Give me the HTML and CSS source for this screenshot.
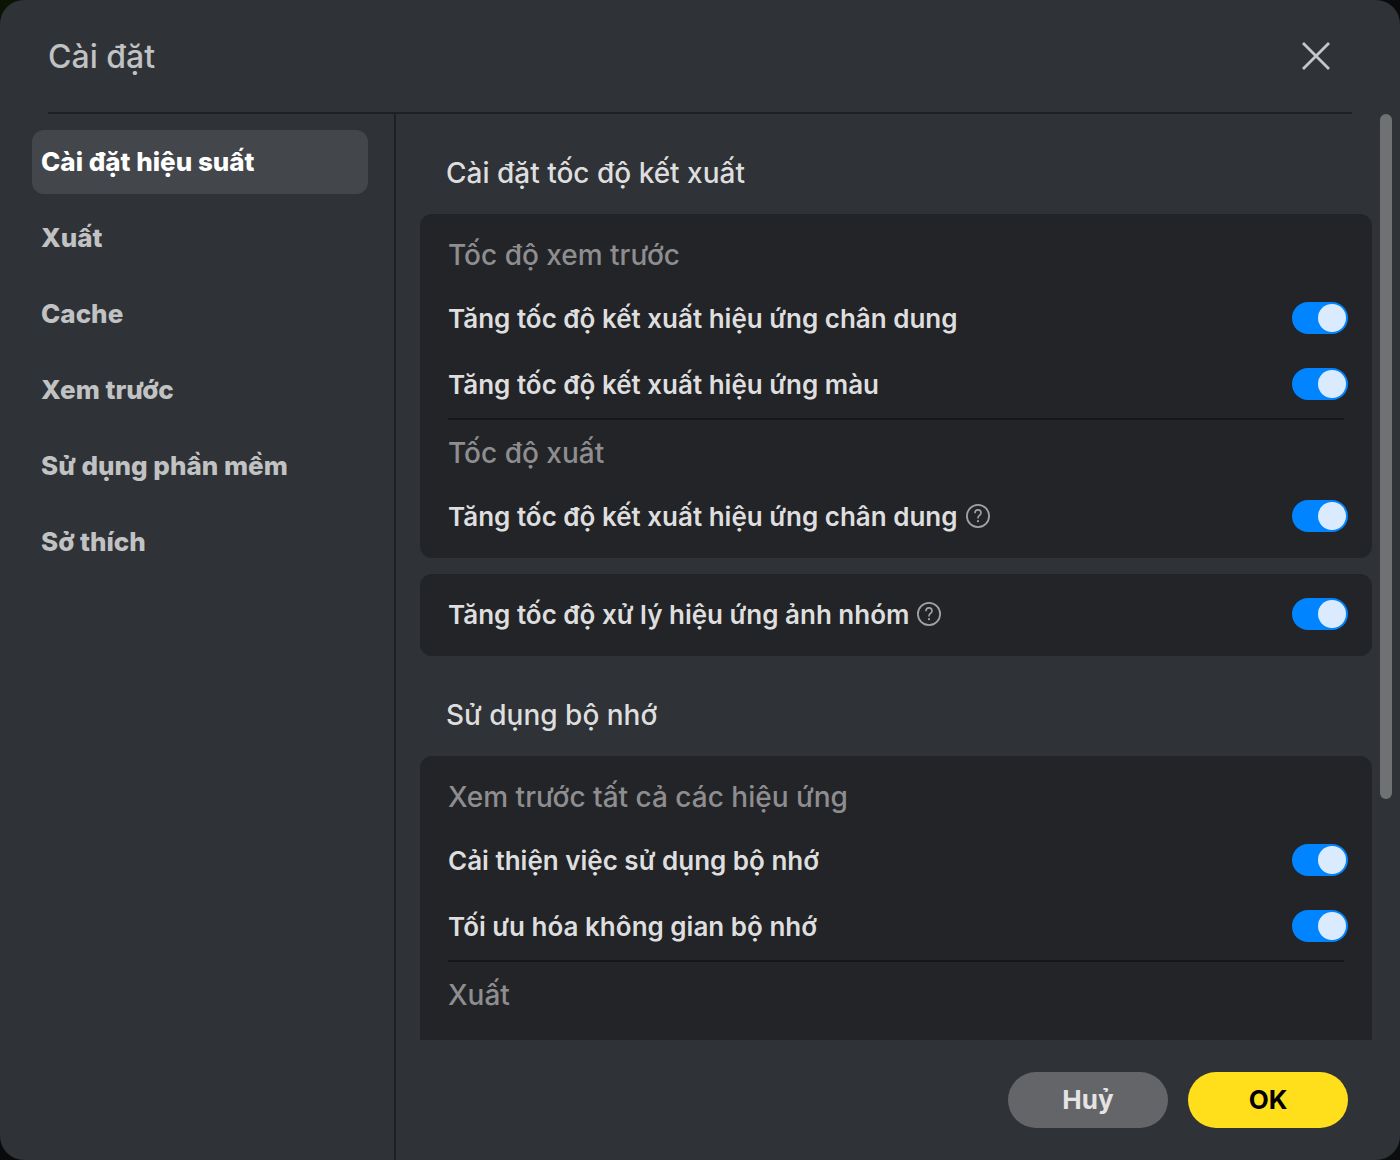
FILE: index.html
```html
<!DOCTYPE html>
<html lang="vi">
<head>
<meta charset="utf-8">
<meta name="viewport" content="width=device-width, initial-scale=1">
<title>Cài đặt</title>
<link rel="stylesheet" href="styles.css">
</head>
<body>
<main class="dialog">
  <header class="dialog-header">
    <h1 class="dialog-title">Cài đặt</h1>
    <button class="close" type="button">
      <svg width="28" height="28" viewBox="0 0 28 28" fill="none" stroke="currentColor" stroke-width="2.8" aria-hidden="true"><path d="M1 1 27 27M27 1 1 27"/></svg>
    </button>
  </header>
  <div class="dialog-body">
    <nav class="sidebar">
      <a class="nav-item nav-item-active" href="#performance" aria-current="page">Cài đặt hiệu suất</a>
      <a class="nav-item" href="#export">Xuất</a>
      <a class="nav-item" href="#cache">Cache</a>
      <a class="nav-item" href="#preview">Xem trước</a>
      <a class="nav-item" href="#usage">Sử dụng phần mềm</a>
      <a class="nav-item" href="#preferences">Sở thích</a>
    </nav>
    <div class="content">
      <div class="scroll-area">
        <div class="panel" id="performance">
          <h2 class="section-title">Cài đặt tốc độ kết xuất</h2>
          <section class="card">
            <h3 class="group-title">Tốc độ xem trước</h3>
            <div class="row">
              <label for="preview-portrait">Tăng tốc độ kết xuất hiệu ứng chân dung</label>
              <input class="switch" type="checkbox" role="switch" id="preview-portrait" checked>
            </div>
            <div class="row">
              <label for="preview-color">Tăng tốc độ kết xuất hiệu ứng màu</label>
              <input class="switch" type="checkbox" role="switch" id="preview-color" checked>
            </div>
            <hr class="divider">
            <h3 class="group-title">Tốc độ xuất</h3>
            <div class="row">
              <label for="export-portrait">Tăng tốc độ kết xuất hiệu ứng chân dung</label>
              <button class="help" type="button">
                <svg width="24" height="24" viewBox="0 0 24 24" fill="none" stroke="currentColor" aria-hidden="true"><circle cx="12" cy="12" r="11.1" stroke-width="1.8"/><path d="M9 9.3V8.9a3 3 0 0 1 6 0c0 2.2-3 2.7-3 4.9v.7" stroke-width="1.6"/><circle cx="12" cy="17.2" r="1.1" fill="currentColor" stroke="none"/></svg>
              </button>
              <input class="switch" type="checkbox" role="switch" id="export-portrait" checked>
            </div>
          </section>
          <section class="card card-single">
            <div class="row">
              <label for="group-photo">Tăng tốc độ xử lý hiệu ứng ảnh nhóm</label>
              <button class="help" type="button">
                <svg width="24" height="24" viewBox="0 0 24 24" fill="none" stroke="currentColor" aria-hidden="true"><circle cx="12" cy="12" r="11.1" stroke-width="1.8"/><path d="M9 9.3V8.9a3 3 0 0 1 6 0c0 2.2-3 2.7-3 4.9v.7" stroke-width="1.6"/><circle cx="12" cy="17.2" r="1.1" fill="currentColor" stroke="none"/></svg>
              </button>
              <input class="switch" type="checkbox" role="switch" id="group-photo" checked>
            </div>
          </section>
          <h2 class="section-title">Sử dụng bộ nhớ</h2>
          <section class="card card-last">
            <h3 class="group-title">Xem trước tất cả các hiệu ứng</h3>
            <div class="row">
              <label for="memory-usage">Cải thiện việc sử dụng bộ nhớ</label>
              <input class="switch" type="checkbox" role="switch" id="memory-usage" checked>
            </div>
            <div class="row">
              <label for="memory-space">Tối ưu hóa không gian bộ nhớ</label>
              <input class="switch" type="checkbox" role="switch" id="memory-space" checked>
            </div>
            <hr class="divider">
            <h3 class="group-title">Xuất</h3>
          </section>
        </div>
        <div class="scroll-track"><div class="scroll-thumb"></div></div>
      </div>
      <footer class="actions">
        <button class="action action-cancel" type="button">Huỷ</button>
        <button class="action action-ok" type="button">OK</button>
      </footer>
    </div>
  </div>
</main>
</body>
</html>
```

FILE: styles.css
```css
* {
  box-sizing: border-box;
}

body {
  margin: 0;
  background: linear-gradient(135deg, #0b1402, #08090a 20%, #0c0d0f);
  color: #dededf;
  font-family: Inter, "Noto Sans", sans-serif;
  font-size: 26px;
  font-weight: 600;
}

button {
  margin: 0;
  padding: 0;
  border: 0;
  background: none;
  color: inherit;
  font: inherit;
}

h1,
h2,
h3 {
  margin: 0;
  font-weight: 500;
}

.dialog {
  display: flex;
  flex-direction: column;
  height: 100vh;
  border-radius: 24px;
  background: #2f3236;
  overflow: hidden;
}

.dialog-header {
  display: flex;
  flex: none;
  align-items: center;
  justify-content: space-between;
  height: 114px;
  margin: 0 48px;
  padding-right: 22px;
  border-bottom: 2px solid #1f2022;
}

.dialog-title {
  color: #c1c2c3;
  font-size: 32px;
}

.close {
  display: flex;
  color: #c6c7c8;
}

.dialog-body {
  display: flex;
  flex: 1;
  min-height: 0;
}

.sidebar {
  display: flex;
  flex: none;
  flex-direction: column;
  gap: 12px;
  width: 396px;
  padding: 16px 26px 16px 32px;
  border-right: 2px solid #1f2022;
}

.nav-item {
  display: flex;
  align-items: center;
  height: 64px;
  padding: 0 9px 2px;
  border-radius: 12px;
  color: #c1c2c3;
  font-weight: 800;
  text-decoration: none;
}

.nav-item-active {
  background: #43464a;
  color: #fff;
}

.content {
  display: flex;
  flex: 1;
  flex-direction: column;
  min-width: 0;
}

.scroll-area {
  display: flex;
  flex: 1;
  gap: 8px;
  min-height: 0;
  padding: 0 8px 0 24px;
}

.panel {
  flex: 1;
  overflow-y: auto;
  scrollbar-width: none;
}

.scroll-track {
  width: 12px;
}

.scroll-thumb {
  height: 74%;
  border-radius: 6px;
  background: #707172;
}

.section-title {
  display: flex;
  align-items: center;
  height: 100px;
  padding: 18px 26px 0;
  font-size: 28px;
}

.card {
  padding: 8px 24px 9px 28px;
  border-radius: 12px;
  background: #232427;
}

.card-single {
  margin-top: 16px;
  padding-top: 7px;
}

.card-last {
  min-height: 480px;
}

.group-title {
  display: flex;
  align-items: center;
  height: 63px;
  padding-top: 2px;
  color: #8e8e90;
  font-size: 28px;
}

.row {
  display: flex;
  align-items: center;
  gap: 8px;
  height: 66px;
}

.divider {
  height: 2px;
  margin: 1px 4px 0 0;
  border: 0;
  background: #161719;
}

.help {
  display: flex;
  color: #a2a2a3;
}

.switch {
  display: flex;
  align-items: center;
  width: 56px;
  height: 32px;
  margin: 0 0 0 auto;
  padding: 2px;
  border-radius: 16px;
  background: #66676a;
  appearance: none;
}

.switch::before {
  width: 28px;
  height: 28px;
  border-radius: 50%;
  background: #dbebff;
  content: "";
}

.switch:checked {
  justify-content: flex-end;
  background: #0084ff;
}

.actions {
  display: flex;
  flex: none;
  justify-content: flex-end;
  gap: 20px;
  padding: 32px 52px;
}

.action {
  width: 160px;
  height: 56px;
  padding-bottom: 2px;
  border-radius: 28px;
  font-weight: 700;
}

.action-cancel {
  background: #646568;
  color: #e4e4e5;
}

.action-ok {
  background: #ffdf1c;
  color: #000;
}
```
